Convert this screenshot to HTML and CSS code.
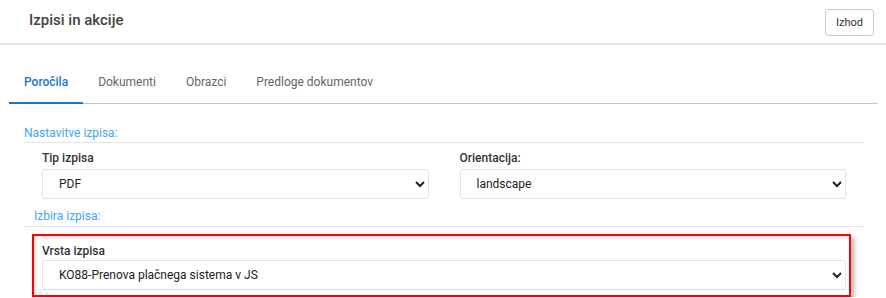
FILE: index.html
```html
<!DOCTYPE html>
<html lang="sl">
<head>
  <meta charset="UTF-8">
  <meta name="viewport" content="width=device-width, initial-scale=1.0">
  <title>Izpisi in akcije</title>
  <link rel="stylesheet" href="styles.css">
</head>
<body>
  <div class="header">
    <h1>Izpisi in akcije</h1>
    <button class="btn-exit">Izhod</button>
  </div>

  <div class="tabs">
    <div class="tab active">Poročila</div>
    <div class="tab">Dokumenti</div>
    <div class="tab">Obrazci</div>
    <div class="tab">Predloge dokumentov</div>
  </div>

  <div class="section">
    <div class="legend">Nastavitve izpisa:</div>
    <div class="row">
      <div class="form-group">
        <label for="tip">Tip izpisa</label>
        <select id="tip">
          <option>PDF</option>
        </select>
      </div>
      <div class="form-group">
        <label for="orient">Orientacija:</label>
        <select id="orient">
          <option>landscape</option>
        </select>
      </div>
    </div>
  </div>

  <div class="section">
    <div class="legend legend-inset">Izbira izpisa:</div>
    <div class="highlight">
      <div class="form-group">
        <label for="vrsta">Vrsta izpisa</label>
        <select id="vrsta">
          <option>KO88-Prenova plačnega sistema v JS</option>
        </select>
      </div>
    </div>
  </div>
</body>
</html>
```

FILE: styles.css
```css
body {
  margin: 0;
  padding: 0;
  font-family: Roboto, "Liberation Sans", Arial, sans-serif;
  background-color: #fff;
  color: #333;
  overflow: hidden;
}
.header {
  display: flex;
  justify-content: space-between;
  align-items: flex-start;
  height: 43px;
  padding: 0 12px 0 29px;
  border-bottom: 2px solid #e6e6e6;
}
.header h1 {
  margin: 0;
  padding-top: 10px;
  font-size: 15px;
  font-weight: 500;
  line-height: 20px;
  color: #444;
}
.btn-exit {
  margin-top: 9px;
  width: 49px;
  height: 27px;
  padding: 0;
  font-family: inherit;
  font-size: 11px;
  color: #333;
  background-color: #fff;
  border: 1px solid #ccc;
  border-radius: 3px;
  cursor: pointer;
}
.tabs {
  display: flex;
  margin: 16px 8px 0 9px;
  border-bottom: 1px solid #c6c6c6;
}
.tab {
  padding: 14px 15px 13px;
  margin-bottom: -1px;
  font-size: 12px;
  line-height: 14px;
  color: #666;
  border-bottom: 2px solid transparent;
  cursor: pointer;
}
.tab.active {
  color: #1976d2;
  font-weight: 500;
  border-bottom-color: #1976d2;
}
.section {
  margin: 0 22px 0 24px;
}
.legend {
  margin-top: 22px;
  padding-bottom: 2px;
  font-size: 12px;
  line-height: 14px;
  color: #42a5f5;
  border-bottom: 1px solid #e3e3e3;
}
.legend-inset {
  margin-top: 10px;
  padding-bottom: 3px;
  padding-left: 10px;
}
.row {
  display: grid;
  grid-template-columns: 1fr 1fr;
  gap: 31px;
  padding: 8px 18px 0;
}
.form-group label {
  display: block;
  margin-bottom: 4px;
  font-size: 12px;
  font-weight: 500;
  line-height: 14px;
  color: #333;
}
.form-group select {
  width: 100%;
  height: 30px;
  padding: 0 0 0 12px;
  font-family: inherit;
  font-size: 12px;
  color: #222;
  background-color: #fff;
  border: 1px solid #dce3ea;
  border-radius: 3px;
}
.highlight {
  margin: 7px 13px 0 8px;
  padding: 8px 3px 5px 8px;
  border: 2px solid #f00;
  box-shadow: 3px 3px 5px rgba(0,0,0,0.3), inset 2px 2px 3px rgba(0,0,0,0.12);
}
.highlight .form-group label {
  margin-bottom: 2px;
}
```
